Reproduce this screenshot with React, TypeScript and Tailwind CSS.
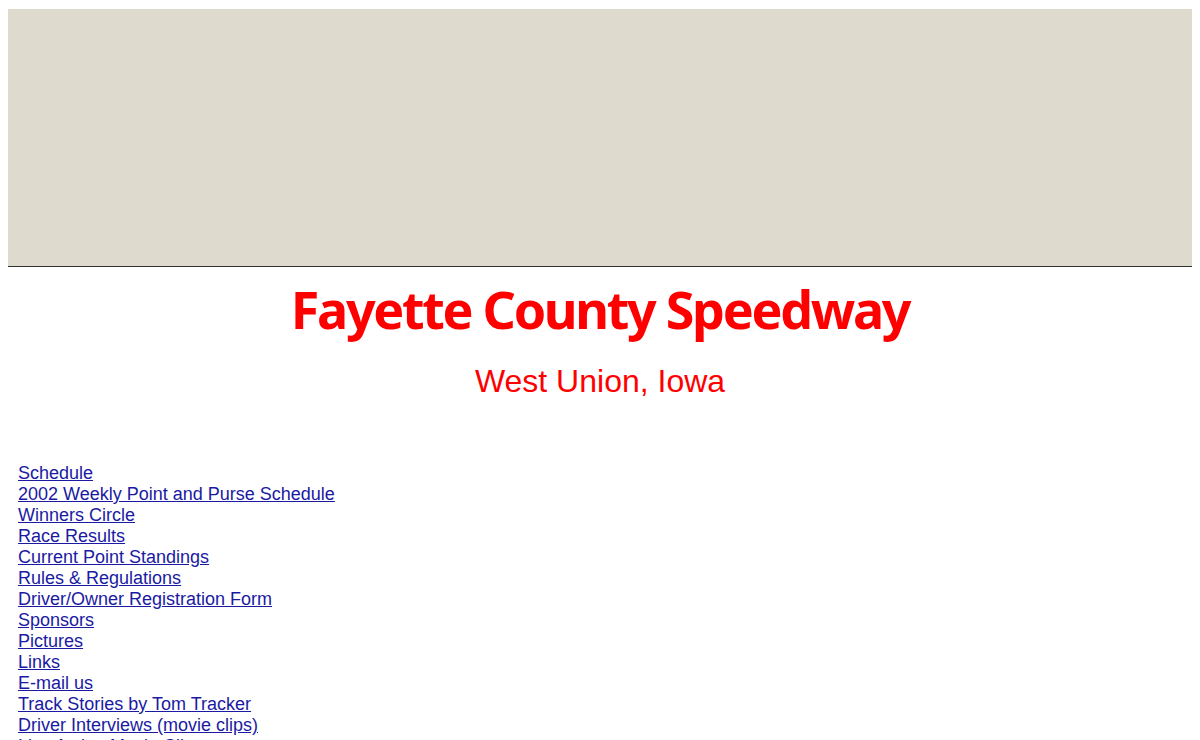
import React from 'react';

const links = [
  'Schedule',
  '2002 Weekly Point and Purse Schedule',
  'Winners Circle',
  'Race Results',
  'Current Point Standings',
  'Rules & Regulations',
  'Driver/Owner Registration Form',
  'Sponsors',
  'Pictures',
  'Links',
  'E-mail us',
  'Track Stories by Tom Tracker',
  'Driver Interviews (movie clips)',
  'Live Action Movie Clips',
];

export default function App() {
  return (
    <div className="min-h-screen bg-white px-2 pt-[9px] font-['Liberation_Sans',Arial,sans-serif]">
      {/* banner area */}
      <div className="h-[258px] bg-[#dfdace] border-b-[1.5px] border-[#333333]" />

      <h1 className="mt-[10px] text-center text-[52px] leading-[64px] font-bold text-[#ff0000] font-['Noto_Sans',sans-serif] tracking-[-2.3px]">
        Fayette County Speedway
      </h1>
      <p className="mt-[22px] text-center text-[32px] leading-[36px] text-[#ff0000]">
        West Union, Iowa
      </p>

      <ul className="mt-[64px] pl-[10px] text-[18px] leading-[21px]">
        {links.map((name) => (
          <li key={name}>
            <a href="#" className="text-[#1a1aa3] underline">
              {name}
            </a>
          </li>
        ))}
      </ul>
    </div>
  );
}
